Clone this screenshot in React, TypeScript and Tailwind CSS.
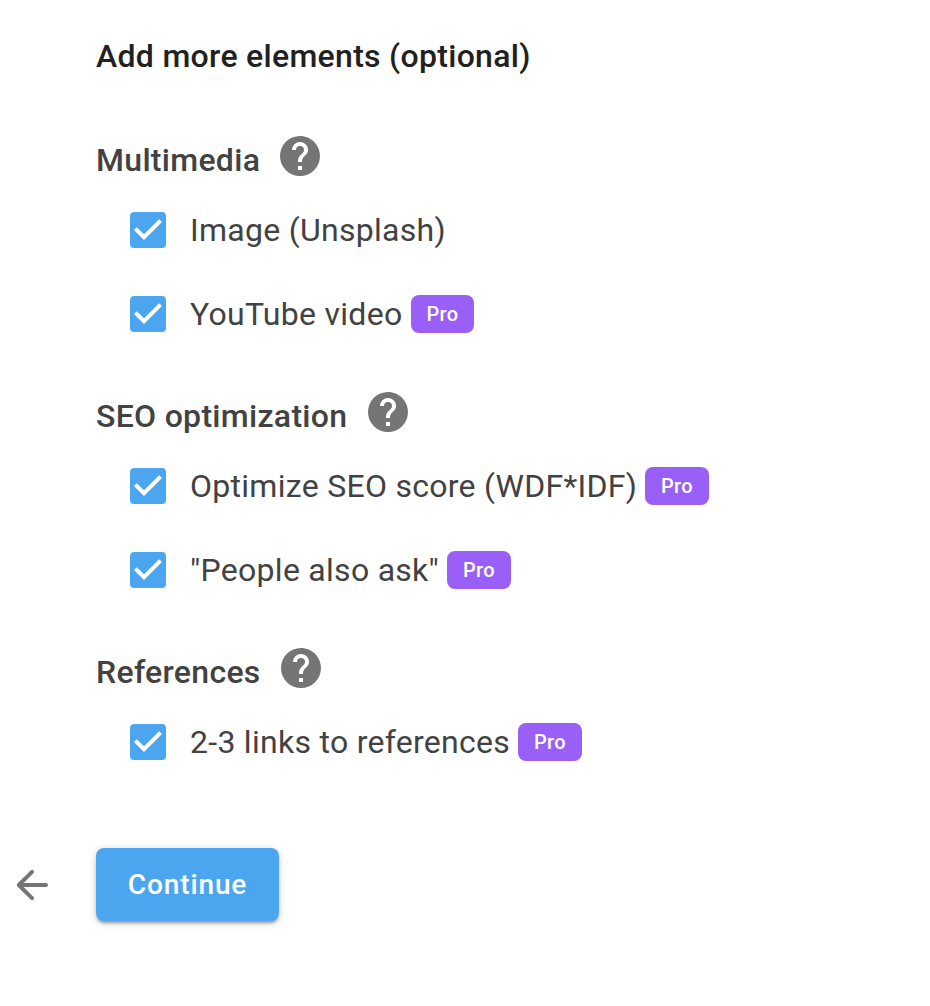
type ItemProps = { label: string; width: string; badge?: string };
type SectionProps = { title: string; titleWidth: string; items: ItemProps[] };

const sections: SectionProps[] = [
  {
    title: "Multimedia",
    titleWidth: "w-[184px]",
    items: [
      { label: "Image (Unsplash)", width: "w-[264px]" },
      { label: "YouTube video", width: "w-[221px]", badge: "w-[63px]" },
    ],
  },
  {
    title: "SEO optimization",
    titleWidth: "w-[272px]",
    items: [
      { label: "Optimize SEO score (WDF*IDF)", width: "w-[455px]", badge: "w-16" },
      { label: '"People also ask"', width: "w-[257px]", badge: "w-16" },
    ],
  },
  {
    title: "References",
    titleWidth: "w-[185px]",
    items: [{ label: "2-3 links to references", width: "w-[328px]", badge: "w-16" }],
  },
];

function HelpIcon() {
  return (
    <svg viewBox="2 2 20 20" className="-mt-2 size-10 shrink-0 fill-[#757575]">
      <path d="M15.07 11.25l-.9.92C13.45 12.89 13 13.5 13 15h-2v-.5c0-1.11.45-2.11 1.17-2.83l1.24-1.26c.37-.36.59-.86.59-1.41a2 2 0 0 0-2-2 2 2 0 0 0-2 2H8a4 4 0 0 1 4-4 4 4 0 0 1 4 4c0 .88-.36 1.67-.93 2.25M13 19h-2v-2h2M12 2A10 10 0 0 0 2 12a10 10 0 0 0 10 10 10 10 0 0 0 10-10C22 6.47 17.5 2 12 2z" />
    </svg>
  );
}

function Item({ label, width, badge }: ItemProps) {
  return (
    <label className="flex h-[84px] items-center">
      <svg viewBox="3 3 18 18" className="mr-6 size-9 shrink-0 fill-[#4ba6ef]">
        <path d="M10 17l-5-5 1.41-1.42L10 14.17l7.59-7.59L19 8m0-5H5c-1.11 0-2 .9-2 2v14a2 2 0 0 0 2 2h14a2 2 0 0 0 2-2V5a2 2 0 0 0-2-2z" />
      </svg>
      <span className={`${width} shrink-0 whitespace-nowrap text-[32px] tracking-[0.28px] text-[#424242]`}>{label}</span>
      {badge && (
        <span className={`${badge} flex h-[38px] items-center justify-center rounded-lg bg-[#9a5ff7] text-[20px] font-medium tracking-[0.35px] text-white`}>
          Pro
        </span>
      )}
    </label>
  );
}

export default function App() {
  return (
    <main className="h-[1006px] w-[930px] overflow-hidden bg-white px-24 pt-8 font-['Roboto',sans-serif]">
      <h1 className="h-12 text-[32px] leading-[48px] font-medium tracking-[0.3px] text-[#212121]">Add more elements (optional)</h1>
      <div className="pt-14">
        {sections.map((section) => (
          <section key={section.title} className="mb-9">
            <div className="flex h-12 items-center">
              <h2 className={`${section.titleWidth} shrink-0 whitespace-nowrap text-[32px] font-medium tracking-[0.3px] text-[#424242]`}>{section.title}</h2>
              <HelpIcon />
            </div>
            <div className="ml-[34px] pt-1">
              {section.items.map((item) => <Item key={item.label} {...item} />)}
            </div>
          </section>
        ))}
      </div>
      <div className="-ml-20 mt-16 flex items-center">
        <button aria-label="Back" className="mr-12 size-8">
          <svg viewBox="4 4 16 16" className="size-8 fill-[#757575]">
            <path d="M19 11H7.83l4.88-4.88c.39-.39.39-1.02 0-1.41-.39-.39-1.02-.39-1.41 0l-6.59 6.59c-.39.39-.39 1.02 0 1.41l6.59 6.59c.39.39 1.02.39 1.41 0 .39-.39.39-1.02 0-1.41L7.83 13H19c.55 0 1-.45 1-1s-.45-1-1-1z" />
          </svg>
        </button>
        <button className="h-[73px] w-[183px] rounded-lg bg-[#4ba6ef] text-[28px] font-medium tracking-[0.9px] text-white shadow-[0_3px_3px_-1px_rgba(0,0,0,0.32),0_2px_8px_rgba(0,0,0,0.18)]">Continue</button>
      </div>
    </main>
  );
}
